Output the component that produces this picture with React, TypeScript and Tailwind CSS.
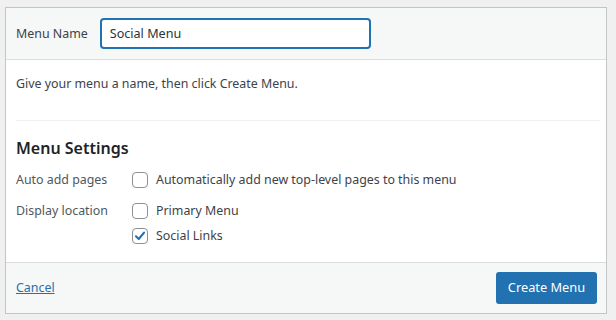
import { useState } from "react";

function Checkbox({ checked, onChange }: { checked: boolean; onChange: () => void }) {
  return (
    <button
      type="button"
      onClick={onChange}
      className="w-4 h-4 shrink-0 rounded-[4px] border border-[#8c8f94] bg-white flex items-center justify-center"
    >
      {checked && (
        <svg viewBox="0 0 16 16" className="w-[16px] h-[16px]">
          <path d="M3.4 8.3 L6.6 11.4 L12.6 4.2" fill="none" stroke="#2271b1" strokeWidth="2.4" strokeLinecap="round" strokeLinejoin="round" />
        </svg>
      )}
    </button>
  );
}

export default function App() {
  const [name, setName] = useState("Social Menu");
  const [autoAdd, setAutoAdd] = useState(false);
  const [primary, setPrimary] = useState(false);
  const [social, setSocial] = useState(true);

  return (
    <div
      className="min-h-screen bg-[#f0f0f1] pl-[5px] pr-[9px] pt-[7px] pb-[5px] text-[12.4px] text-[#3c434a]"
      style={{ fontFamily: '"Noto Sans", "Open Sans", sans-serif' }}
    >
      <div className="border border-[#c3c4c7] bg-white">
        {/* header */}
        <div className="flex items-center bg-[#f6f7f7] border-b border-[#dcdcde] pl-[10px] py-[10px]">
          <label className="mr-[12px] leading-5">Menu Name</label>
          <input
            value={name}
            onChange={(e) => setName(e.target.value)}
            className="w-[271px] h-[31px] rounded-[4px] border-2 border-[#2271b1] bg-white px-[8px] text-[12.6px] text-[#2c3338] outline-none"
          />
        </div>

        {/* body */}
        <div className="px-[10px] pt-[14px] pb-[16px]">
          <p className="leading-5">Give your menu a name, then click Create Menu.</p>
          <div className="mt-[26px] mr-[-4px] border-t border-[#f0f0f1]" />
          <h3 className="mt-[15px] text-[16px] leading-6 font-semibold text-[#1d2327]">Menu Settings</h3>

          <div className="mt-[10px] flex leading-5">
            <div className="w-[116px] text-[#50575e]">Auto add pages</div>
            <div className="flex items-center gap-2">
              <Checkbox checked={autoAdd} onChange={() => setAutoAdd(!autoAdd)} />
              <span>Automatically add new top-level pages to this menu</span>
            </div>
          </div>

          <div className="mt-[11px] flex leading-5">
            <div className="w-[116px] text-[#50575e]">Display location</div>
            <div className="flex flex-col gap-[5px]">
              <div className="flex items-center gap-2">
                <Checkbox checked={primary} onChange={() => setPrimary(!primary)} />
                <span>Primary Menu</span>
              </div>
              <div className="flex items-center gap-2">
                <Checkbox checked={social} onChange={() => setSocial(!social)} />
                <span>Social Links</span>
              </div>
            </div>
          </div>
        </div>

        {/* footer */}
        <div className="flex items-center justify-between bg-[#f6f7f7] border-t border-[#dcdcde] pl-[10px] pr-[9px] py-[9px]">
          <a href="#" className="text-[#2271b1] underline leading-5">Cancel</a>
          <button className="h-[32px] w-[101px] rounded-[3px] bg-[#2271b1] text-white text-[12.8px]">
            Create Menu
          </button>
        </div>
      </div>
    </div>
  );
}
